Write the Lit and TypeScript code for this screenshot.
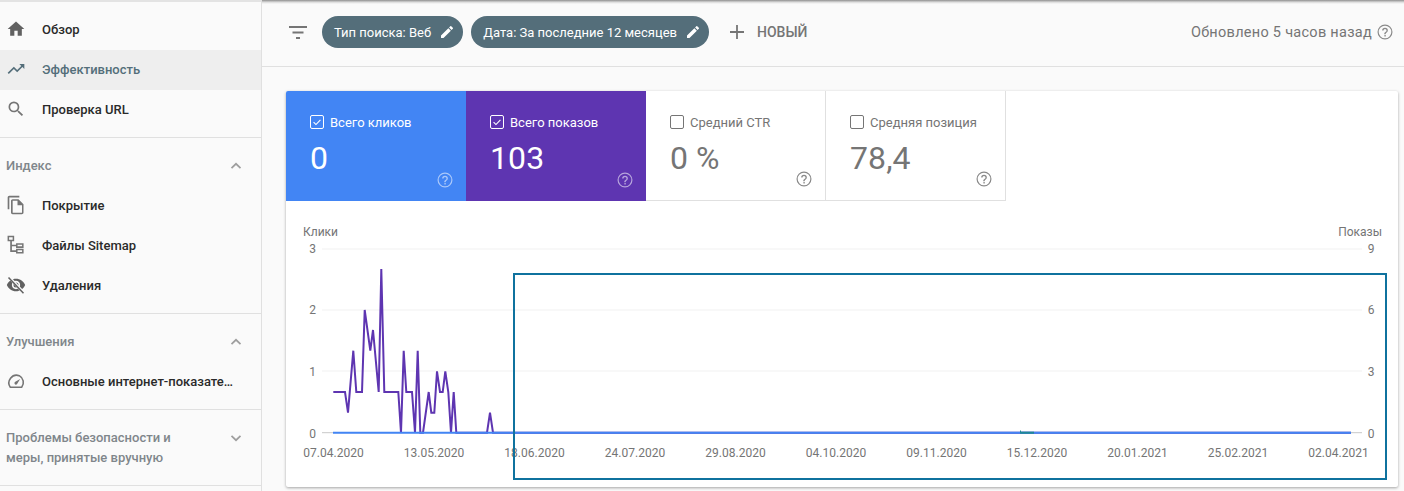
import { LitElement, html, css, svg } from "lit";
import { customElement } from "lit/decorators.js";

const ic = (d: any, size = 20) => html`<svg class="ic" width=${size} height=${size} viewBox="0 0 24 24">${d}</svg>`;
const icons: Record<string, any> = {
  home: svg`<path d="M10 20v-6h4v6h5v-8h3L12 3 2 12h3v8z" fill="#616161"/>`,
  trend: svg`<path d="M16 6l2.290 2.290-4.880 4.880-4-4L2 16.590 3.410 18l6-6 4 4 6.300-6.290L22 12V6z" fill="#546e7a"/>`,
  search: svg`<path d="M15.500 14h-.790l-.280-.270A6.470 6.470 0 0 0 16 9.500 6.500 6.500 0 1 0 9.500 16c1.610 0 3.090-.590 4.230-1.570l.270.280v.790l5 4.990L20.490 19l-4.990-5zm-6 0C7.010 14 5 11.990 5 9.500S7.010 5 9.500 5 14 7.010 14 9.500 11.990 14 9.500 14z" fill="#757575"/>`,
  copy: svg`<path d="M16 1H4c-1.100 0-2 .9-2 2v14h2V3h12V1zm-1 4l6 6v10c0 1.100-.9 2-2 2H7.990C6.890 23 6 22.100 6 21l.01-14c0-1.100.89-2 1.990-2h7zm-1.200 1.800H8v14.400h11.200v-8.900h-5.400z" fill="#757575"/>`,
  tree: svg`<path transform="translate(-1.500 -1.500) scale(1.130)" d="M3 2h7v6H7.600v3.600h4.400V10h8v5h-8v-1.600H7.600v4.200H12V16h8v5h-8v-1.600H5.800V8H3V2zm1.600 1.600v2.800h3.800V3.600H4.600zm9 8v1.800h4.800v-1.800h-4.800zm0 6v1.800h4.800v-1.800h-4.800z" fill="#757575" fill-rule="evenodd"/>`,
  eye: svg`<path d="M12 4.500C7 4.500 2.730 7.610 1 12c1.730 4.390 6 7.500 11 7.500s9.270-3.110 11-7.500c-1.730-4.390-6-7.500-11-7.500zM12 17c-2.760 0-5-2.240-5-5s2.240-5 5-5 5 2.240 5 5-2.240 5-5 5zm0-8a3 3 0 1 0 0 6 3 3 0 0 0 0-6z" fill="#616161"/><path d="M3.500 2.500l18 19" stroke="#fafafa" stroke-width="3.400"/><path d="M3 3l18 19" stroke="#616161" stroke-width="1.800"/>`,
  gauge: svg`<path d="M5.200 19.500h13.600A9.200 9.200 0 0 0 15.900 5.600 9.200 9.200 0 0 0 5.200 19.500z" fill="none" stroke="#757575" stroke-width="1.900" stroke-linejoin="round"/><path d="M10.400 15.600a2 2 0 0 0 2.900.1L17 9.600l-5.900 3.300a2 2 0 0 0-.7 2.700z" fill="#757575"/>`,
};
const chevUp = html`<svg class="chev" width="14" height="14" viewBox="0 0 14 14"><path d="M2.500 9.200L7 4.800l4.500 4.400" fill="none" stroke="#9e9e9e" stroke-width="1.700"/></svg>`;
const chevDown = html`<svg class="chev" width="14" height="14" viewBox="0 0 14 14"><path d="M2.500 4.800L7 9.200l4.500-4.400" fill="none" stroke="#9e9e9e" stroke-width="1.700"/></svg>`;
const pencil = html`<svg width="16" height="16" viewBox="0 0 24 24"><path d="M3 17.250V21h3.750L17.810 9.940l-3.750-3.750L3 17.250zM20.710 7.040a1 1 0 0 0 0-1.410l-2.340-2.340a1 1 0 0 0-1.410 0l-1.830 1.830 3.750 3.750 1.830-1.830z" fill="#fff"/></svg>`;
const help = (c: string, s = 18) => html`<svg width=${s} height=${s} viewBox="0 0 24 24"><path d="M12 2a10 10 0 1 0 0 20 10 10 0 0 0 0-20zm0 18.400a8.400 8.400 0 1 1 0-16.800 8.400 8.400 0 0 1 0 16.800zM11.200 18h1.800v-1.900h-1.800V18zM12 6.200a3.800 3.800 0 0 0-3.800 3.800H10a2 2 0 1 1 4 0c0 2-3 1.750-3 5h1.800c0-2.250 3-2.500 3-5A3.800 3.800 0 0 0 12 6.200z" fill=${c}/></svg>`;

const zoomPts: [number, number][] = [[130,516],[165,516],[174,578],[190,392],[199,516],[216,516],[224,270],[241,392],[249,330],[266,516],[274,147],[283,516],[325,516],[333,638],[341,392],[349,516],[366,516],[375,638],[383,392],[391,638],[399,638],[416,516],[424,578],[433,578],[441,454],[450,516],[458,516],[466,454],[475,516],[483,638],[491,516],[499,638],[591,638],[600,578],[609,638]];
const purple = zoomPts.map(([x, y]) => `${(290 + x / 3).toFixed(1)},${(220 + y / 3).toFixed(1)}`).join(" ") + " 1351,432.7";
const gridY = [249, 310, 371];
const dates = ["07.04.2020","13.05.2020","18.06.2020","24.07.2020","29.08.2020","04.10.2020","09.11.2020","15.12.2020","20.01.2021","25.02.2021","02.04.2021"];
const tiles = [
  { cls: "blue", label: "Всего кликов", val: "0", on: true },
  { cls: "purple", label: "Всего показов", val: "103", on: true },
  { cls: "plain", label: "Средний CTR", val: "0 %", on: false },
  { cls: "plain", label: "Средняя позиция", val: "78,4", on: false },
];

@customElement("app-root")
export class AppRoot extends LitElement {
  static styles = css`
    :host { display: flex; width: 1404px; height: 491px; overflow: hidden; background: #fafafa; font-family: Roboto, "Noto Sans", sans-serif; }
    * { box-sizing: border-box; }
    .side { width: 262px; height: 491px; flex: none; border-right: 1px solid #e0e0e0; border-top: 2px solid #e3e3e3; padding-top: 8px; background: #fafafa; }
    .item { height: 40px; display: flex; align-items: center; font-size: 13px; font-weight: 500; color: #2a2a2a; }
    .item .ic { margin: 0 0 0 6px; flex: none; }
    .item span { margin-left: 16px; white-space: nowrap; }
    .item.active { background: #eeeeee; color: #546e7a; }
    .group { border-bottom: 1px solid #e0e0e0; padding-bottom: 8px; }
    .group.first { padding-bottom: 7px; }
    .group.first .item { padding-bottom: 2px; }
    .group.flush { padding-bottom: 0; }
    .head { display: flex; align-items: center; justify-content: space-between; padding: 0 18px 0 6px; font-size: 13px; font-weight: 500; color: #80868b; }
    .head.tall { height: 75px; line-height: 20px; align-items: flex-start; padding-top: 18px; }
    .head.tall .chev { margin-top: 3px; }
    .head.sec { height: 47px; padding-top: 8px; }
    .main { flex: 1; min-width: 0; height: 491px; display: flex; flex-direction: column; position: relative; }
    .shade { position: absolute; left: 0; right: 0; top: 0; height: 4px; background: linear-gradient(#8f8f8f, #dcdcdc 55%, #fafafa); }
    .bar { height: 67px; flex: none; display: flex; align-items: center; border-bottom: 1px solid #e0e0e0; padding: 0 10px 2px 24px; font-size: 14px; }
    .filter { width: 22px; height: 16px; margin-right: 14px; flex: none; }
    .chip { height: 32px; border-radius: 16px; background: #546e7a; color: #fff; display: flex; align-items: center; gap: 8px; padding: 0 8px 0 12px; font-size: 13px; margin-right: 8px; white-space: nowrap; }
    .add { display: flex; align-items: center; margin-left: 11px; color: #757575; font-weight: 500; font-size: 14px; }
    .add svg { margin-right: 11px; }
    .upd { margin-left: auto; display: flex; align-items: center; gap: 4px; color: #757575; font-size: 14.500px; letter-spacing: .28px; }
    .body { padding: 24px 6px 4px 24px; }
    .card { width: 1112px; height: 396px; background: #fff; border-radius: 2px; box-shadow: 0 1px 3px rgba(0,0,0,.35); overflow: hidden; position: relative; }
    .tiles { display: flex; height: 110px; }
    .tile { width: 180px; flex: none; padding: 21px 0 0 24px; position: relative; border-bottom: 1px solid #e0e0e0; }
    .tile.plain { color: #757575; border-right: 1px solid #e0e0e0; }
    .tile.blue { background: #4285f4; color: #fff; border: 0; }
    .tile.purple { background: #5e35b1; color: #fff; border: 0; }
    .lab { display: flex; align-items: center; gap: 6px; font-size: 13px; height: 20px; }
    .box { width: 14px; height: 14px; border: 1px solid currentColor; border-radius: 2px; flex: none; display: block; }
    .val { font-size: 32px; line-height: 40px; margin-top: 6px; font-weight: 400; letter-spacing: .1px; }
    .q { position: absolute; right: 12px; bottom: 12px; display: flex; }
    svg.chart { display: block; }
    svg.chart text { font-family: Roboto, sans-serif; font-size: 12px; fill: #757575; }
  `;

  render() {
    const it = (i: string, t: string, a = false) => html`<div class="item ${a ? "active" : ""}">${ic(icons[i])}<span>${t}</span></div>`;
    return html`
      <nav class="side">
        <div class="group first">${it("home", "Обзор")}${it("trend", "Эффективность", true)}${it("search", "Проверка URL")}</div>
        <div class="group">
          <div class="head sec"><span>Индекс</span>${chevUp}</div>
          ${it("copy", "Покрытие")}${it("tree", "Файлы Sitemap")}${it("eye", "Удаления")}
        </div>
        <div class="group">
          <div class="head sec"><span>Улучшения</span>${chevUp}</div>
          ${it("gauge", "Основные интернет-показате…")}
        </div>
        <div class="group flush">
          <div class="head tall"><span>Проблемы безопасности и<br />меры, принятые вручную</span>${chevDown}</div>
        </div>
      </nav>
      <main class="main">
        <div class="shade"></div>
        <div class="bar">
          <svg class="filter" viewBox="0 0 22 16"><path d="M3 3h18M6.500 8.500h11M10 14h4" fill="none" stroke="#757575" stroke-width="1.800"/></svg>
          <div class="chip">Тип поиска: Веб ${pencil}</div>
          <div class="chip">Дата: За последние 12 месяцев ${pencil}</div>
          <div class="add">
            <svg width="18" height="18" viewBox="0 0 18 18"><path d="M9 2v14M2 9h14" stroke="#757575" stroke-width="1.800"/></svg>НОВЫЙ
          </div>
          <div class="upd">Обновлено 5 часов назад ${help("#8a8a8a", 18)}</div>
        </div>
        <div class="body">
          <section class="card">
            <div class="tiles">
              ${tiles.map((t) => html`
                <div class="tile ${t.cls}">
                  <div class="lab">
                    <svg class="box" viewBox="0 0 14 14">${t.on ? svg`<path d="M3 7.200l2.800 2.800 5.200-5.600" fill="none" stroke="currentColor" stroke-width="1.300"/>` : ""}</svg>
                    ${t.label}
                  </div>
                  <div class="val">${t.val}</div>
                  <div class="q">${help(t.cls === "plain" ? "#8a8a8a" : "rgba(255,255,255,.55)")}</div>
                </div>`)}
            </div>
            <svg class="chart" width="1112" height="286" viewBox="286 201 1112 286">
              <text x="303" y="236">Клики</text>
              <text x="1382" y="236" text-anchor="end">Показы</text>
              ${gridY.map((y) => svg`<line x1="322" x2="1362" y1=${y} y2=${y} stroke="#f1f1f1" stroke-width="1"/>`)}
              <line x1="322" x2="1362" y1="432.700" y2="432.700" stroke="#c8c8c8" stroke-width="1"/>
              ${["3","2","1","0"].map((v, i) => svg`<text x="312.500" y=${[253,314,376,438][i]} text-anchor="middle">${v}</text>`)}
              ${["9","6","3","0"].map((v, i) => svg`<text x="1371" y=${[253,314,376,438][i]} text-anchor="middle">${v}</text>`)}
              ${dates.map((d, i) => svg`<text x=${333.500 + i * 100.500} y="457" text-anchor="middle">${d}</text>`)}
              <polyline points=${purple} fill="none" stroke="#5e35b1" stroke-width="2" stroke-linejoin="miter"/>
              <line x1="333" x2="1351" y1="432.700" y2="432.700" stroke="#4285f4" stroke-width="2"/>
              <path d="M1020 432.700h14" stroke="#1f8a96" stroke-width="2"/>
              <path d="M1020.500 432v-1.500" stroke="#1f8a96" stroke-width="1"/>
              <rect x="514" y="274" width="872" height="205" fill="none" stroke="#0f729e" stroke-width="2"/>
            </svg>
          </section>
        </div>
      </main>
    `;
  }
}
